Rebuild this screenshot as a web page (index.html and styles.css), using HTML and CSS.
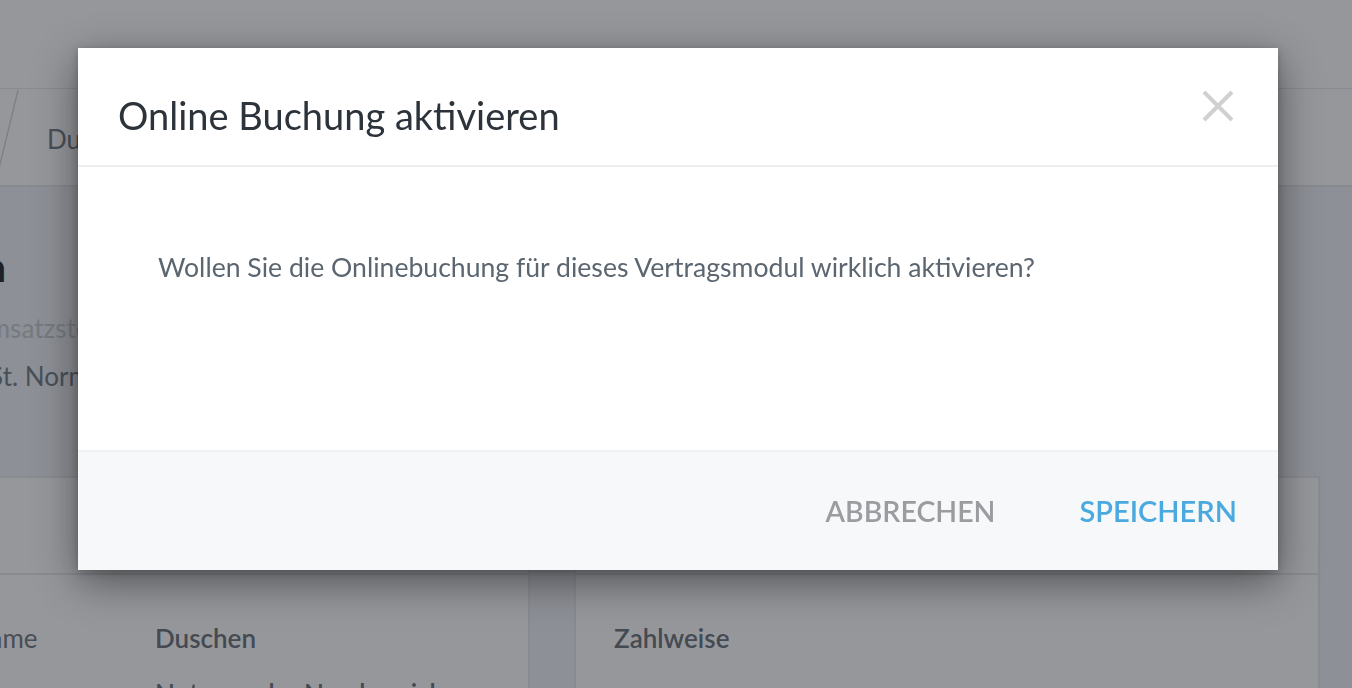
FILE: index.html
```html
<!DOCTYPE html>
<html lang="de">
<head>
<meta charset="utf-8">
<title>Online Buchung aktivieren</title>
<link rel="stylesheet" href="styles.css">
</head>
<body>
<div class="page">
  <header class="topbar"></header>
  <nav class="crumbs">
    <svg class="crumb-sep" width="20" height="97" viewBox="0 0 20 97"><line x1="18" y1="1" x2="-4" y2="92" stroke="#cfd3d8" stroke-width="1.5"/></svg>
    <span class="crumb">Duschen</span>
  </nav>
  <main class="content">
    <h1 class="hero-title">Duschen</h1>
    <p class="hero-label">Umsatzsteuersatz</p>
    <p class="hero-value">USt. Normalsatz 19 %</p>
    <div class="cards">
      <section class="card">
        <div class="card-head"></div>
        <div class="card-row"><span class="row-label">Name</span><span class="row-value">Duschen</span></div>
        <div class="card-row"><span class="row-label"></span><span class="row-value">Nutzung der Nassbereiche</span></div>
      </section>
      <section class="card">
        <div class="card-head"></div>
        <div class="card-row"><span class="row-value">Zahlweise</span></div>
      </section>
    </div>
  </main>
</div>

<div class="overlay">
  <div class="modal" role="dialog" aria-labelledby="modal-title">
    <div class="modal-head">
      <h2 class="modal-title" id="modal-title">Online Buchung aktivieren</h2>
      <button class="modal-close" aria-label="Schließen">
        <svg width="32" height="32" viewBox="0 0 32 32"><path d="M2 2 L30 30 M30 2 L2 30" stroke="#d0d0d0" stroke-width="4" fill="none"/></svg>
      </button>
    </div>
    <div class="modal-body">
      <p class="modal-text">Wollen Sie die Onlinebuchung für dieses Vertragsmodul wirklich aktivieren?</p>
    </div>
    <div class="modal-foot">
      <button class="btn btn-cancel">Abbrechen</button>
      <button class="btn btn-save">Speichern</button>
    </div>
  </div>
</div>
</body>
</html>
```

FILE: styles.css
```css
* { box-sizing: border-box; }
html, body { margin: 0; padding: 0; }
body {
  width: 1352px;
  height: 688px;
  overflow: hidden;
  font-family: "Lato", "Open Sans", sans-serif;
  background: #edf0f4;
  position: relative;
}

.page {
  display: flex;
  flex-direction: column;
  height: 688px;
  overflow: hidden;
}

.topbar {
  height: 89px;
  flex: none;
  background: #ffffff;
  border-bottom: 1px solid #e2e5e9;
}

.crumbs {
  height: 98px;
  flex: none;
  background: #ffffff;
  border-bottom: 2px solid #e2e5e9;
  display: flex;
  align-items: center;
}
.crumb-sep { align-self: flex-start; flex: none; }
.crumb {
  margin-left: 27px;
  font-size: 26px;
  color: #637078;
  padding-top: 4px;
}

.content {
  margin-left: -70px;
  flex: 1;
  min-height: 0;
  display: flex;
  flex-direction: column;
}
.hero-title {
  margin: 56px 0 0 -80px;
  font-size: 40px;
  line-height: 48px;
  font-weight: 700;
  color: #101214;
}
.hero-label {
  margin: 21px 0 0 40px;
  font-size: 26px;
  line-height: 32px;
  color: #bfc4c8;
}
.hero-value {
  margin: 16px 0 0 40px;
  font-size: 26px;
  line-height: 32px;
  color: #637078;
}

.cards {
  margin-top: 84px;
  display: grid;
  grid-template-columns: 600px 746px;
  gap: 44px;
}
.card {
  background: #ffffff;
  border: 2px solid #e4e7eb;
  height: 300px;
}
.card-head {
  height: 97px;
  border-bottom: 2px solid #e4e7eb;
}
.card-row {
  display: flex;
  padding: 47px 38px 0 38px;
  font-size: 26px;
  line-height: 32px;
}
.card-row + .card-row { padding-top: 23px; }
.row-label {
  width: 185px;
  flex: none;
  color: #636c74;
}
.row-value {
  font-weight: 600;
  color: #5b646c;
}

/* Modal */
.overlay {
  position: fixed;
  inset: 0;
  background: rgba(45, 48, 56, 0.5);
  display: flex;
  justify-content: center;
  align-items: flex-start;
  padding: 48px 0 0 4px;
}
.modal {
  width: 1200px;
  background: #ffffff;
  box-shadow: 0 12px 40px rgba(0, 0, 0, 0.45), 0 2px 8px rgba(0, 0, 0, 0.2);
  display: flex;
  flex-direction: column;
}
.modal-head {
  height: 119px;
  padding: 16px 44px 0 40px;
  border-bottom: 2px solid #eeeeee;
  display: flex;
  align-items: center;
  justify-content: space-between;
}
.modal-title {
  margin: 0;
  font-size: 38px;
  font-weight: 400;
  color: #2d333b;
}
.modal-close {
  border: 0;
  background: none;
  padding: 0;
  width: 32px;
  height: 32px;
  margin-bottom: 17px;
  cursor: pointer;
}
.modal-close svg { display: block; }

.modal-body {
  height: 283px;
  padding: 85px 80px 0;
}
.modal-text {
  margin: 0;
  font-size: 26.6px;
  line-height: 1.2;
  color: #5b6670;
}

.modal-foot {
  height: 120px;
  background: #f7f8fa;
  border-top: 2px solid #eff1f3;
  display: flex;
  justify-content: flex-end;
  align-items: flex-start;
  gap: 84px;
  padding: 42px 41px 0 0;
}
.btn {
  border: 0;
  background: none;
  padding: 0;
  font-family: inherit;
  font-size: 29px;
  line-height: 1.2;
  font-weight: 600;
  text-transform: uppercase;
  cursor: pointer;
}
.btn-cancel { color: #9a9ca0; font-size: 28.5px; }
.btn-save { color: #4aa9de; }
```
